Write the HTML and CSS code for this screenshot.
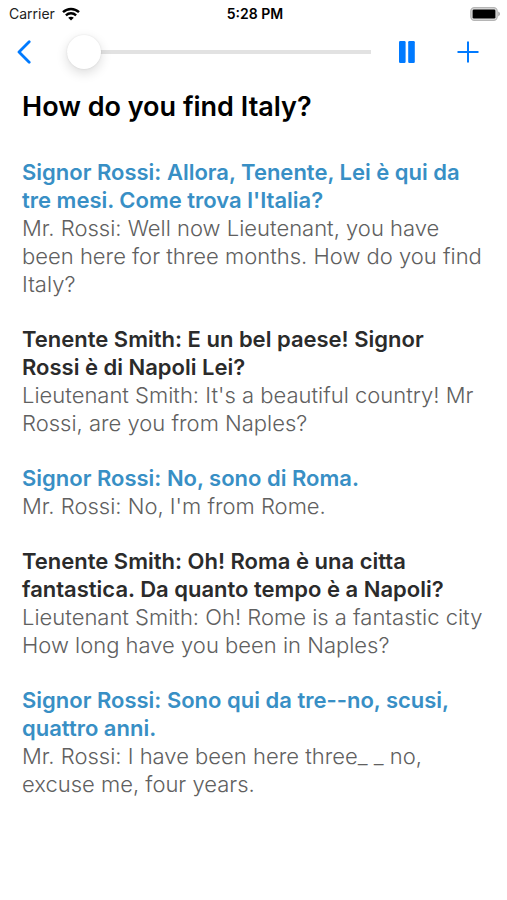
FILE: index.html
```
<!DOCTYPE html>
<html lang="en">
<head>
<meta charset="utf-8">
<meta name="viewport" content="width=device-width, initial-scale=1">
<title>How do you find Italy?</title>
<link rel="stylesheet" href="styles.css">
</head>
<body>
<header>
  <div class="status">
    <div class="carrier">
      <span>Carrier</span>
      <svg width="18" height="14" viewBox="0 0 18 14" aria-hidden="true">
        <g fill="none" stroke="#000" stroke-width="2.4">
          <path d="M1 5.2C5.5 .9 12.5 .9 17 5.2"/>
          <path d="M3.9 8.3c2.9-2.7 7.3-2.7 10.2 0"/>
        </g>
        <path d="M9 13.6 6.2 10.8c1.6-1.4 4-1.4 5.6 0z"/>
      </svg>
    </div>
    <time class="clock">5:28 PM</time>
    <svg class="battery" width="31" height="14" viewBox="0 0 31 14" aria-hidden="true">
      <rect x=".8" y=".6" width="26.4" height="12.8" rx="3.6" fill="#ddd" stroke="#b5b5b5" stroke-width="1.2"/>
      <rect x="2.6" y="2.4" width="22.8" height="9.2" rx="1.4"/>
      <path d="M28.2 4.6c2.4.9 2.4 3.9 0 4.8z" fill="#aaa"/>
    </svg>
  </div>
  <div class="player">
    <button class="icon back" type="button" aria-label="Back">
      <svg width="14" height="24" viewBox="0 0 14 24"><path d="M12.2 1.8 2 12l10.2 10.2" fill="none" stroke="#007aff" stroke-width="2.8" stroke-linecap="round" stroke-linejoin="round"/></svg>
    </button>
    <input class="seek" type="range" min="0" max="100" value="0" aria-label="Playback position">
    <button class="icon pause" type="button" aria-label="Pause">
      <svg width="16" height="22" viewBox="0 0 16 22" fill="#007aff"><rect width="6.6" height="22" rx="1.2"/><rect x="9.2" width="6.6" height="22" rx="1.2"/></svg>
    </button>
    <button class="icon add" type="button" aria-label="Add">
      <svg width="22" height="22" viewBox="0 0 22 22"><path d="M11 .5v21M.5 11h21" stroke="#007aff" stroke-width="2"/></svg>
    </button>
  </div>
</header>
<main>
  <h1>How do you find Italy?</h1>
  <section class="line rossi">
    <p class="italian" lang="it">Signor Rossi: Allora, Tenente, Lei è qui da<br>tre mesi. Come trova l'Italia?</p>
    <p>Mr. Rossi: Well now Lieutenant, you have<br>been here for three months. How do you find<br>Italy?</p>
  </section>
  <section class="line">
    <p class="italian" lang="it">Tenente Smith: E un bel paese! Signor<br>Rossi è di Napoli Lei?</p>
    <p>Lieutenant Smith: It's a beautiful country! Mr<br>Rossi, are you from Naples?</p>
  </section>
  <section class="line rossi">
    <p class="italian" lang="it">Signor Rossi: No, sono di Roma.</p>
    <p>Mr. Rossi: No, I'm from Rome.</p>
  </section>
  <section class="line">
    <p class="italian" lang="it">Tenente Smith: Oh! Roma è una citta<br>fantastica. Da quanto tempo è a Napoli?</p>
    <p>Lieutenant Smith: Oh! Rome is a fantastic city<br>How long have you been in Naples?</p>
  </section>
  <section class="line rossi">
    <p class="italian" lang="it">Signor Rossi: Sono qui da tre--no, scusi,<br>quattro anni.</p>
    <p>Mr. Rossi: I have been here three_ _ no,<br>excuse me, four years.</p>
  </section>
</main>
</body>
</html>
```
FILE: styles.css
```
* { box-sizing: border-box; }
body {
  margin: 0;
  background: #fff;
  color: #000;
  font-family: Inter, "Liberation Sans", sans-serif;
}
svg { display: block; }
.status {
  display: grid;
  grid-template-columns: 1fr auto 1fr;
  align-items: center;
  height: 27px;
  padding: 0 6px 0 9px;
  font-size: 14px;
}
.carrier { display: flex; align-items: center; gap: 7px; color: #222; }
.clock { font-weight: 600; }
.battery { justify-self: end; }
.player {
  display: flex;
  align-items: center;
  height: 50px;
  padding: 0 28px 0 17px;
}
.icon {
  display: flex;
  flex: none;
  padding: 0;
  border: 0;
  background: none;
}
.seek {
  -webkit-appearance: none;
  appearance: none;
  flex: 1;
  min-width: 0;
  height: 34px;
  margin: 0 28px 0 36px;
  background: linear-gradient(#e2e2e2, #e2e2e2) center / 100% 4px no-repeat;
  border-radius: 2px;
}
.seek::-webkit-slider-thumb {
  -webkit-appearance: none;
  width: 34px;
  height: 34px;
  border-radius: 50%;
  background: #fff;
  box-shadow: 0 0 2px rgba(0, 0, 0, 0.1), 0 4px 12px rgba(0, 0, 0, 0.14);
}
.add { margin-left: 42px; }
main { padding: 12px 22px 24px; }
h1 {
  margin: 0 0 33px;
  font-size: 27px;
  font-weight: 600;
  line-height: 36px;
}
.line {
  margin-bottom: 27px;
  color: #2b2b2b;
  font-size: 22px;
  line-height: 28px;
  white-space: nowrap;
}
.line p { margin: 0; color: #606060; font-weight: 300; }
.line .italian { color: inherit; font-weight: 600; }
.rossi { color: #388fc5; }
```
